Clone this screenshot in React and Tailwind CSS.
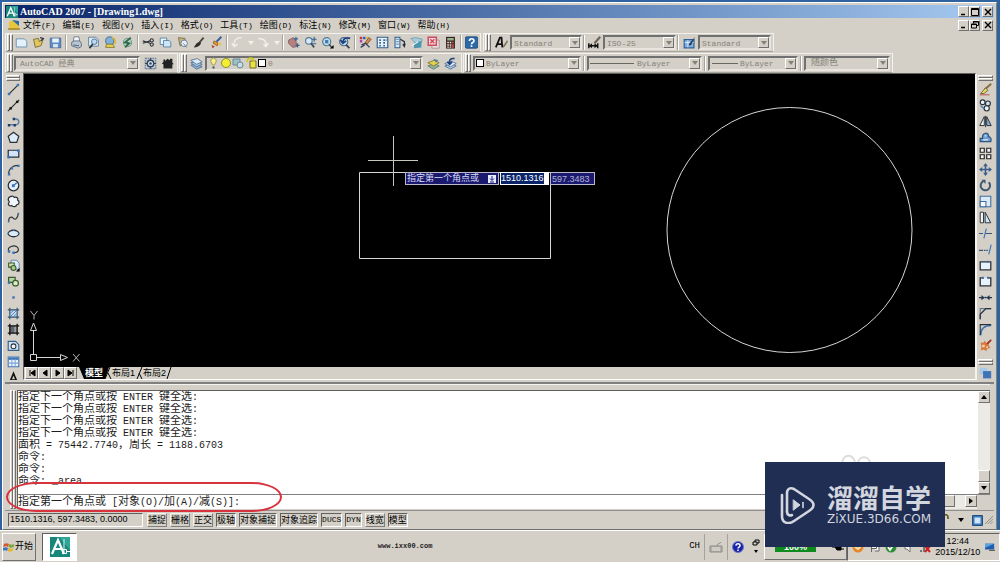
import { useState } from 'react';

const RAISED = 'border border-t-white border-l-white border-r-[#707070] border-b-[#707070]';
const SUNKEN = 'border border-t-[#606060] border-l-[#606060] border-r-white border-b-white';

const K = '#2a3038';
const B = '#3f74b5';
const L = '#cfe4fa';

/* 16x16 glyphs */
const ICONS = {
  blank: <path d="M1.5 3.5h10l3 3v7h-13z" fill="#e4f1fb" stroke="#6c95b4" strokeWidth="1.2" />,
  open: (
    <>
      <path d="M2 4l6-1 1 4 5-4-3 9-7 2z" fill="#e2c65a" stroke="#6b6331" />
      <path d="M10 2l4 1-3 3" fill="none" stroke={K} strokeWidth="1.4" />
    </>
  ),
  save: (
    <>
      <path d="M1.5 2.5h13v12h-13z" fill="#5d8cc4" stroke="#49688f" />
      <path d="M4 3h8v5H4z" fill="#e9f3fb" />
      <path d="M5 10h6v4H5z" fill="#dfe6ee" />
    </>
  ),
  print: (
    <>
      <path d="M5 1h6l1 6H4z" fill="#f4f8fb" stroke="#607080" />
      <path d="M2 8l3-2h7l2 3v4l-4 2-8-3z" fill="#b7c5d6" stroke="#566374" />
      <path d="M4 11l7 1" stroke="#3d4b5e" />
    </>
  ),
  preview: (
    <>
      <path d="M2 1.5h9l3 3v8H2z" fill="#dcebf8" stroke="#52759d" />
      <circle cx="9" cy="7" r="3.4" fill="#b9d8f2" stroke="#41607f" />
      <path d="M7 10l-4 5" stroke={K} strokeWidth="2" />
    </>
  ),
  publish: (
    <>
      <circle cx="7" cy="6" r="5" fill="#7fb1da" stroke="#41607f" />
      <path d="M3 10h8l2 4H2z" fill="#e9d24e" stroke="#77702d" />
      <path d="M10 2c4 1 5 5 3 8" fill="none" stroke="#d9b92f" strokeWidth="2" />
    </>
  ),
  dwf: (
    <>
      <circle cx="8" cy="8" r="5" fill="#b8d7c6" stroke="#5b8776" />
      <path d="M12 2L5 8l5 1-5 5" fill="none" stroke="#2f6b4f" strokeWidth="2.4" />
    </>
  ),
  cut: (
    <>
      <path d="M1 6l9 3M1 9l9-3" stroke={K} strokeWidth="1.3" />
      <circle cx="12" cy="5.5" r="2" fill="none" stroke={K} strokeWidth="1.3" />
      <circle cx="12" cy="10.5" r="2" fill="none" stroke={K} strokeWidth="1.3" />
    </>
  ),
  copy: (
    <>
      <path d="M1.5 2.5h8v8h-8z" fill="#eaf4fc" stroke="#4a779c" />
      <path d="M5.5 5.5h7l2 2v6h-9z" fill="#cfe5f7" stroke="#4a779c" />
    </>
  ),
  paste: (
    <>
      <path d="M3 2l8 1 1 8-7 1z" fill="#c6b478" stroke="#6d6445" />
      <circle cx="10" cy="9" r="4" fill="#e9f2f8" stroke="#557089" />
      <path d="M9 9l4 5" stroke="#557089" />
    </>
  ),
  brush: (
    <>
      <path d="M13 2L8 8" stroke="#4e4638" strokeWidth="2.4" />
      <path d="M8 7l2 2c-2 4-5 5-9 5 2-3 3-6 7-7z" fill="#2f2d2b" />
    </>
  ),
  match: (
    <>
      <path d="M14 1L8 7" stroke="#3d5f9c" strokeWidth="2.4" />
      <path d="M5 6l5 3-1 3-5-3z" fill="#e99a32" stroke="#8c5618" />
      <path d="M2 11l4 2-3 2z" fill="#b33b2c" />
      <path d="M11 8l3 1-1 3-3-1z" fill="#e9c34c" />
    </>
  ),
  undo: <path d="M13 2C6 2 3 6 4 12M1 9l3 4 4-3" fill="none" stroke="#f2f0ea" strokeWidth="1.8" />,
  redo: <path d="M2 3c6 0 10 3 9 9M8 10l3 3 3-4" fill="none" stroke="#f2f0ea" strokeWidth="1.8" />,
  pan: (
    <>
      <path d="M2 5l6-3 3 4 1 7-5 1-5-5z" fill="#b8807c" stroke="#7c5a5a" />
      <path d="M11 1v5M8.5 3.5h5M13 9v5M10.5 11.5h5" stroke="#39629c" strokeWidth="1.4" />
    </>
  ),
  zoomRt: (
    <>
      <circle cx="6" cy="6" r="4" fill="#d5eaf8" stroke="#537a99" strokeWidth="1.4" />
      <path d="M8.5 9l4 5" stroke="#3b4a5c" strokeWidth="2" />
      <path d="M12.5 1v6M9.5 4h6M10 9.5h5" stroke="#355f91" strokeWidth="1.3" />
    </>
  ),
  zoomWin: (
    <>
      <circle cx="7" cy="7" r="5" fill="#bcdcf0" stroke="#537a99" strokeWidth="1.4" />
      <path d="M5 5h4v4H5z" fill="#4878a6" />
      <path d="M10 10l3 4" stroke="#3b4a5c" strokeWidth="2" />
      <path d="M15.5 11v4.5H11z" fill="#000" />
    </>
  ),
  zoomPrev: (
    <>
      <circle cx="7" cy="7" r="5" fill="#bcdcf0" stroke="#4d6b85" strokeWidth="1.4" />
      <path d="M15 3c-5-2-8 0-9 4M3 5l3 4 4-3" fill="none" stroke="#1f3f7d" strokeWidth="2.2" />
      <path d="M10 11l4 4" stroke="#2f3b4c" strokeWidth="2" />
    </>
  ),
  props: (
    <>
      <path d="M1 1h3v3H1z" fill="#c33" />
      <path d="M5 1h3v3H5z" fill="#3558c8" />
      <path d="M9 1h3v3H9z" fill="#d8c22d" />
      <path d="M1 5h3v3H1z" fill="#b13bb0" />
      <path d="M12 2l3 2-5 6-3-1z" fill="#cf8d55" stroke="#7b4e2c" />
      <path d="M3 11l5-2 5 5M2 14l5-3" stroke="#3a3f58" strokeWidth="1.6" fill="none" />
    </>
  ),
  design: (
    <>
      <path d="M1.5 1.5h13v13h-13z" fill="#e3f1fb" stroke="#335e8c" strokeWidth="1.4" />
      <path d="M4 4h2v2H4zM4 7.5h2v2H4zM4 11h2v2H4zM9 4h2v2H9zM12 4h1v2h-1zM9 7.5h2v2H9zM9 11h2v2H9z" fill="#335e8c" />
    </>
  ),
  palette: (
    <>
      <path d="M2.5 1.5h6v13h-6z" fill="#dcecf8" stroke="#335e8c" strokeWidth="1.3" />
      <path d="M4 4h3M4 7h3M4 10h3" stroke="#335e8c" />
      <path d="M9 4l5 3v4M12 10l2 3 1-4" fill="none" stroke={K} strokeWidth="1.5" />
    </>
  ),
  sheet: (
    <>
      <path d="M1 3l6-1 8 2-1 4-7 1z" fill="#a9cbdc" stroke="#6d97ab" />
      <path d="M5 8l9-2v8l-9 1z" fill="#4e94ad" />
      <path d="M2 12l8-5" stroke="#e6f4f9" strokeWidth="1.5" />
    </>
  ),
  markup: (
    <>
      <path d="M6 5h9v10H6z" fill="#e6e1e2" stroke="#a88" />
      <path d="M1.5 1.5h10v10h-10z" fill="#f6dbe0" stroke="#cf4a5d" strokeWidth="1.8" />
      <path d="M4 4l5 5M9 4L4 9" stroke="#cf4a5d" strokeWidth="1.8" />
    </>
  ),
  calc: (
    <>
      <path d="M2.5 1h11v14.5h-11z" fill="#3b2626" />
      <path d="M4 2.5h8v3H4z" fill="#93b58a" />
      <path d="M4 7h2v2H4zM7 7h2v2H7zM4 10h2v2H4zM7 10h2v2H7zM4 13h2v1.5H4zM7 13h2v1.5H7z" fill="#e7dcd2" />
      <path d="M10 7h2v2h-2zM10 10h2v4.5h-2z" fill="#c8544a" />
    </>
  ),
  help: (
    <>
      <rect x="0.5" y="1" width="15" height="14" rx="1.5" fill="#2b69a8" stroke="#1d4a7b" />
      <path d="M5.5 6c0-3.500 5.5-3.500 5.5 0 0 2-3 2-3 4M8 11.5v2" fill="none" stroke="#fff" strokeWidth="2" />
    </>
  ),
  textStyle: (
    <>
      <path d="M1 14L6 2h2l1 12M3 10h6" fill="none" stroke="#111" strokeWidth="2.2" />
      <path d="M15 5l-5 7-1 3 3-2 4-6z" fill="#7f755e" />
    </>
  ),
  dimStyle: (
    <>
      <path d="M1 9v6M12 9v6M1 12h11" stroke="#111" strokeWidth="1.8" />
      <path d="M1 12l4-3v6zM12 12L8 9v6z" fill="#111" />
      <path d="M15 1L8 9" stroke="#6b6354" strokeWidth="2.6" />
    </>
  ),
  tableStyle: (
    <>
      <path d="M1.5 4.5h12v10h-12z" fill="#7fb0e2" stroke="#2f5f9b" strokeWidth="1.5" />
      <path d="M2 8h11M6 5v9" stroke="#e5f1fb" />
      <path d="M15 1L8 9l-1 3 3-1z" fill="#2a3a52" />
    </>
  ),
  gear: (
    <>
      <path d="M1.5 1.5h13v13h-13z" fill="#bcc8d6" stroke="#46566b" strokeDasharray="2 1" />
      <circle cx="8" cy="8" r="4" fill="#dfe9f3" stroke="#2f425b" strokeWidth="1.8" />
      <circle cx="8" cy="8" r="1.5" fill="#2f425b" />
      <path d="M8 1.5v3M8 11.5v3M1.5 8h3M11.5 8h3" stroke="#2f425b" strokeWidth="1.5" />
    </>
  ),
  home: (
    <path d="M1 8l2-2V3h2v2l3-3 3 2V2h3v5l2 2h-2v5H3V9z" fill="#222" />
  ),
  layers: (
    <>
      <path d="M1 10l8-2 6 4-7 3z" fill="#8fb0d0" stroke="#4c6c8f" />
      <path d="M1 7l8-2 6 4-7 3z" fill="#a9c7e3" stroke="#4c6c8f" />
      <path d="M1 4l8-2 6 4-7 3z" fill="#dcebf8" stroke="#4c6c8f" />
    </>
  ),
  layerCur: (
    <>
      <path d="M1 11l8-3 6 3-7 4z" fill="#93b3a0" stroke="#5a7566" />
      <path d="M1 7l8-3 6 3-7 4z" fill="#e2d24b" stroke="#77702d" />
      <path d="M8 2l6 2-3 3" fill="#4d7fae" />
    </>
  ),
  layerPrev: (
    <>
      <path d="M1 11l8-3 6 3-7 4z" fill="#a9c7e3" stroke="#4c6c8f" />
      <path d="M1 8l8-3 6 3-7 4z" fill="#dcebf8" stroke="#4c6c8f" />
      <path d="M13 2c-5-1-7 2-6 6M4 6l3 3 3-3" fill="none" stroke="#1f3f7d" strokeWidth="2" />
    </>
  ),
  line: (
    <>
      <path d="M2 14L14 2" stroke={K} strokeWidth="1.5" />
      <path d="M1 12h3v3H1zM12 1h3v3h-3z" fill={B} />
    </>
  ),
  xline: (
    <>
      <path d="M1 15L15 1" stroke={K} strokeWidth="1.5" />
      <path d="M3 10h3v3H3zM11 2h3v3h-3z" fill="#111" />
    </>
  ),
  pline: (
    <>
      <path d="M2 12h9a3.5 3.5 0 000-7H9" fill="none" stroke="#5a7fa8" strokeWidth="1.8" />
      <path d="M1 11h3v3H1zM8 11h3v3H8zM7 3.5h3v3H7z" fill="#1f3c66" />
    </>
  ),
  polygon: <path d="M8 1.5l6.5 5-2.5 7.5H4L1.5 6.5z" fill="#ddecf8" stroke={K} strokeWidth="1.5" />,
  rect: (
    <>
      <path d="M1.5 4h13v8.5h-13z" fill={L} stroke={K} strokeWidth="1.5" />
      <path d="M0.5 11h3v3h-3zM12.5 3h3v3h-3z" fill={B} />
    </>
  ),
  arc: (
    <>
      <path d="M2 14C2 7 7 3 14 3" fill="none" stroke={K} strokeWidth="1.5" />
      <path d="M1 12.5h3v3H1zM4.5 5h3v3h-3zM12.5 2h3v3h-3z" fill={B} />
    </>
  ),
  circle: (
    <>
      <circle cx="8" cy="8" r="6.5" fill="#e4f1fb" stroke={K} strokeWidth="1.6" />
      <path d="M8 8l4-3.500" stroke={B} strokeWidth="1.6" />
      <path d="M6 6.5h3.5V10H6z" fill={B} />
    </>
  ),
  cloud: (
    <path
      d="M4 2c2-1 4-1 5 1 3-1 5 1 4 3 3 2 2 6-1 6-1 3-4 3-6 1-3 1-5-1-4-3 1-1 1-2 0-3-1-2 0-4 2-5z"
      fill="#f2f7fb"
      stroke={K}
      strokeWidth="1.5"
    />
  ),
  spline: (
    <>
      <path d="M2 13c0-7 4-6 6-4s5 1 6-6" fill="none" stroke={K} strokeWidth="1.4" />
      <path d="M1 12h2v2H1zM13 2h2v2h-2z" fill={B} />
    </>
  ),
  ellipse: (
    <>
      <ellipse cx="8" cy="8" rx="6.5" ry="4" fill="#dcebf8" stroke={K} strokeWidth="1.6" />
      <path d="M0.5 7h2v2h-2zM13.5 7h2v2h-2zM7 3h2v2H7z" fill={B} />
    </>
  ),
  ellipseArc: (
    <>
      <path d="M2 10C-1 3 14 1 14 8c0 3-3 4-6 4" fill="none" stroke={K} strokeWidth="1.5" />
      <path d="M6.5 10.5h3v3h-3zM1 9h3v3H1z" fill={B} />
    </>
  ),
  insert: (
    <>
      <path d="M5 1.5h7l3 4v7H5z" fill="#dcebf8" stroke="#51799e" />
      <path d="M2 5h7v5H2z" fill="#c8e2a8" stroke="#3c5a2b" strokeWidth="1.3" />
      <circle cx="8" cy="11" r="3" fill="#a9cf8c" stroke="#3c5a2b" strokeWidth="1.3" />
      <path d="M15.5 11v4.5H11z" fill="#000" />
    </>
  ),
  block: (
    <>
      <path d="M2 3h8v6H2z" fill="#b7d4a6" stroke="#3c5a2b" strokeWidth="1.5" />
      <circle cx="10.5" cy="10" r="3.5" fill="#d9ecc8" stroke="#3c5a2b" strokeWidth="1.5" />
      <path d="M1 8h3v3H1z" fill={B} />
    </>
  ),
  point: <path d="M6.5 6.5h3v3h-3z" fill={B} />,
  hatch: (
    <>
      <path d="M3.5 3.5h9v9h-9z" fill="#c3dcf2" />
      <path d="M3.5 1v14M12.5 1v14M1 3.5h14M1 12.5h14" stroke="#34506f" strokeWidth="1.4" />
      <path d="M4 8l4-4M4 12l8-8M8 12l4-4" stroke={B} />
    </>
  ),
  gradient: (
    <>
      <path d="M3.5 3.5h9v9h-9z" fill="#63656b" />
      <path d="M9 4h3v8H9z" fill="#9ba1ab" />
      <path d="M3.5 1v14M12.5 1v14M1 3.5h14M1 12.5h14" stroke="#111" strokeWidth="1.6" />
    </>
  ),
  region: (
    <>
      <path d="M1.5 3h9l4 4v7h-13z" fill={L} stroke="#365f8b" strokeWidth="1.4" />
      <circle cx="8" cy="9" r="3" fill="#f0f6fb" stroke={K} strokeWidth="1.3" />
    </>
  ),
  table: (
    <>
      <path d="M1.5 2.5h13v12h-13z" fill="#eef5fc" stroke={B} strokeWidth="1.3" />
      <path d="M2 4.5h12" stroke={B} strokeWidth="3" />
      <path d="M2 10h12M6 5v9M10 5v9" stroke="#7da5d6" strokeWidth="1.3" />
    </>
  ),
  mtext: <path d="M3 15L8 3l5 12M5 11h6" fill="none" stroke="#111" strokeWidth="2" />,
  erase: (
    <>
      <path d="M15 1L7 8" stroke="#8b6a3c" strokeWidth="2.4" />
      <path d="M8 6l3 3-5 4H2z" fill="#efd85e" stroke="#5b5330" />
      <path d="M1 14.5h12" stroke="#c05f58" strokeWidth="1.4" />
    </>
  ),
  copyObj: (
    <>
      <circle cx="4.5" cy="4" r="3" fill="#eaf3fa" stroke={K} strokeWidth="1.4" />
      <circle cx="11" cy="5.5" r="3" fill="#cfe2f2" stroke={K} strokeWidth="1.4" />
      <circle cx="9.5" cy="11.5" r="3.2" fill="#eaf3fa" stroke={K} strokeWidth="1.4" />
      <path d="M2 8l4 4" stroke={B} strokeWidth="1.4" />
    </>
  ),
  mirror: (
    <>
      <path d="M6.5 2v11H1z" fill="#f0f5fa" stroke={K} strokeWidth="1.2" />
      <path d="M9.5 2v11H15z" fill="#8ab2dc" stroke={K} strokeWidth="1.2" />
      <path d="M8 1v14" stroke="#222" />
    </>
  ),
  offset: (
    <>
      <path d="M1.5 13v-4h3C3 1 13 1 11.5 7c3 0 4 3 3 6z" fill="#6ea0d4" stroke="#2d5480" strokeWidth="1.5" />
      <path d="M5 11h6M7 6h2" stroke="#dbeaf8" strokeWidth="1.5" />
    </>
  ),
  array: (
    <path d="M1.5 1.5h5v5h-5zM9.5 1.5h5v5h-5zM1.5 9.5h5v5h-5zM9.5 9.5h5v5h-5z" fill="#f2f5f8" stroke="#222" strokeWidth="1.4" />
  ),
  move: (
    <path
      d="M8 0l3 4H9v3h3V5l4 3-4 3V9H9v3h2l-3 4-3-4h2V9H4v2L0 8l4-3v2h3V4H5z"
      fill="#3a5f8c"
    />
  ),
  rotate: (
    <>
      <path d="M5 3a5.8 5.8 0 107 1" fill="none" stroke="#3c5874" strokeWidth="2.4" />
      <path d="M3 1h5v5z" fill="#3c5874" />
    </>
  ),
  scale: (
    <>
      <path d="M1.5 1.5h13v13h-13z" fill="#dbeaf8" stroke="#3f6c9b" strokeWidth="1.3" />
      <path d="M1.5 8h7v6.5h-7z" fill="#f6fafd" stroke="#3f6c9b" strokeWidth="1.3" />
    </>
  ),
  stretch: (
    <>
      <path d="M1.5 1.5h4v13h-4z" fill="#f5f8fb" stroke={K} strokeWidth="1.2" />
      <path d="M7.5 1.5l7 13h-7z" fill={L} stroke={K} strokeWidth="1.2" />
    </>
  ),
  trim: (
    <>
      <path d="M0 8h5M8 8h8" stroke="#3b5674" strokeWidth="1.4" />
      <path d="M9 2L6 14" stroke={B} strokeWidth="1.5" />
    </>
  ),
  extend: (
    <>
      <path d="M0 9h5M6 9h2M9 9h2" stroke="#3b5674" strokeWidth="1.4" />
      <path d="M15 2l-3 12" stroke={B} strokeWidth="1.5" />
    </>
  ),
  breakPt: (
    <>
      <path d="M1.5 3.5h13v10h-13z" fill="#e8f2fb" stroke={K} strokeWidth="1.6" />
      <path d="M10 2h2v3h-2z" fill={B} />
    </>
  ),
  breakObj: (
    <>
      <path d="M2 3.5h12v10H2z" fill="#e8f2fb" />
      <path d="M5 3.5H1.5v10h13v-10H11" fill="none" stroke={K} strokeWidth="1.6" />
      <path d="M4 2h2v3H4zM10 2h2v3h-2z" fill={B} />
    </>
  ),
  join: <path d="M0 7.5h3V5l4 3.2L3 11.5V9H0zM16 7.5h-3V5L9 8.2l4 3.3V9h3zM7 7h2v2H7z" fill="#20344e" />,
  chamfer: (
    <>
      <path d="M1.5 15V2H15" fill="none" stroke="#5d7a98" strokeWidth="1.3" />
      <path d="M1.5 15V9l7-7H15" fill="none" stroke={K} strokeWidth="1.6" />
    </>
  ),
  fillet: (
    <>
      <path d="M2 15C2 7 6 3 15 3" fill="none" stroke={B} strokeWidth="2" />
      <path d="M1.5 15V2H15" fill="none" stroke={K} strokeWidth="1.3" />
    </>
  ),
  explode: (
    <>
      <path d="M2 4l3 1 2-3 2 3 3-2v5l2 3-4 1-1 3-3-2-4 1 1-4z" fill="#d8763b" />
      <path d="M4 7h3v3H4zM9 9h2v2H9z" fill="#f4d9a8" />
      <path d="M15 1l-5 5" stroke="#a32b1c" strokeWidth="2" />
    </>
  ),
  order: (
    <>
      <path d="M1 1h9v8H1z" fill="#a9c9e8" />
      <path d="M5 5h10v9H5z" fill="#3f74b5" />
    </>
  ),
};

const FILE_TOOLS = [
  [['blank', '新建'], ['open', '打开'], ['save', '保存']],
  [['print', '打印'], ['preview', '打印预览'], ['publish', '发布'], ['dwf', '三维 DWF']],
  [['cut', '剪切'], ['copy', '复制'], ['paste', '粘贴'], ['brush', '特性匹配'], ['match', '块编辑器']],
  [['undo', '放弃', true], ['redo', '重做', true]],
  [['pan', '实时平移'], ['zoomRt', '实时缩放'], ['zoomWin', '窗口缩放'], ['zoomPrev', '缩放上一个']],
  [['props', '特性'], ['design', '设计中心'], ['palette', '工具选项板'], ['sheet', '图纸集'], ['markup', '标记集'], ['calc', '计算器']],
  [['help', '帮助']],
];

const DRAW_TOOLS = [
  ['line', '直线'], ['xline', '构造线'], ['pline', '多段线'], ['polygon', '正多边形'], ['rect', '矩形'],
  ['arc', '圆弧'], ['circle', '圆'], ['cloud', '修订云线'], ['spline', '样条曲线'], ['ellipse', '椭圆'],
  ['ellipseArc', '椭圆弧'], ['insert', '插入块'], ['block', '创建块'], ['point', '点'], ['hatch', '图案填充'],
  ['gradient', '渐变色'], ['region', '面域'], ['table', '表格'], ['mtext', '多行文字'],
];

const MODIFY_TOOLS = [
  ['erase', '删除'], ['copyObj', '复制对象'], ['mirror', '镜像'], ['offset', '偏移'], ['array', '阵列'],
  ['move', '移动'], ['rotate', '旋转'], ['scale', '缩放'], ['stretch', '拉伸'], ['trim', '修剪'],
  ['extend', '延伸'], ['breakPt', '打断于点'], ['breakObj', '打断'], ['join', '合并'], ['chamfer', '倒角'],
  ['fillet', '圆角'], ['explode', '分解'],
];

const MENUS = [
  ['文件', 'F'], ['编辑', 'E'], ['视图', 'V'], ['插入', 'I'], ['格式', 'O'], ['工具', 'T'],
  ['绘图', 'D'], ['标注', 'N'], ['修改', 'M'], ['窗口', 'W'], ['帮助', 'H'],
];

const HISTORY = [
  '指定下一个角点或按 ENTER 键全选:',
  '指定下一个角点或按 ENTER 键全选:',
  '指定下一个角点或按 ENTER 键全选:',
  '指定下一个角点或按 ENTER 键全选:',
  '面积 = 75442.7740，周长 = 1188.6703',
  '命令:',
  '命令:',
  '命令: _area',
];

const Icon = ({ name }) => (
  <svg viewBox="0 0 16 16" className="size-[13px] shrink-0" aria-hidden="true">
    {ICONS[name]}
  </svg>
);

const Tool = ({ name, label, tall }) => (
  <button
    type="button"
    aria-label={label}
    className={`flex shrink-0 items-center justify-center ${tall ? 'h-4 w-full' : 'h-4 w-[17px]'}`}
  >
    <Icon name={name} />
  </button>
);

const Down = () => (
  <svg viewBox="0 0 6 4" className="h-1 w-[6px]" aria-hidden="true">
    <path d="M0 0h6L3 4z" fill="currentColor" />
  </svg>
);

const Grip = ({ flat }) =>
  flat ? (
    <div className="flex w-full shrink-0 flex-col px-px">
      <span className={`h-[3px] ${RAISED}`} />
      <span className={`h-[3px] ${RAISED}`} />
    </div>
  ) : (
    <div className="flex shrink-0 self-stretch">
      <span className={`w-[3px] ${RAISED}`} />
      <span className={`w-[3px] ${RAISED}`} />
    </div>
  );

const Sep = () => <span className="mx-px h-[15px] w-[2px] shrink-0 border-l border-r border-l-[#a5a29a] border-r-white" />;

const Bar = ({ children }) => (
  <div className="flex items-center border border-t-[#f4f2ec] border-l-[#f4f2ec] border-r-[#f4f2ec] border-b-[#a8a59d] pl-px">
    {children}
  </div>
);

const Combo = ({ label, value, width, size = 'text-[8px]', children }) => (
  <div className={`flex h-[15px] shrink-0 items-center border-2 border-t-[#707070] border-l-[#707070] border-r-[#e8e5de] border-b-[#e8e5de] pl-px text-[#858278] ${width}`}>
    {children}
    <select aria-label={label} className={`h-3 min-w-0 flex-1 appearance-none bg-transparent pl-px pt-px leading-[11px] outline-none ${size}`}>
      <option>{value}</option>
    </select>
    <span className={`pointer-events-none flex h-[11px] w-[11px] items-center justify-center bg-[#d4d0c8] ${RAISED}`}>
      <Down />
    </span>
  </div>
);

const Swatch = () => <span className="mr-px size-2 shrink-0 border border-black bg-white" />;

const WinButton = ({ label, children }) => (
  <button type="button" aria-label={label} className={`flex h-[11px] w-[11px] items-center justify-center bg-[#d4d0c8] ${RAISED}`}>
    <svg viewBox="0 0 8 8" className="size-2" fill="none" stroke="#000" aria-hidden="true">
      {children}
    </svg>
  </button>
);

const WinButtons = ({ restore }) => (
  <div className="flex">
    <WinButton label="最小化">
      <path d="M1 6.5h4" strokeWidth="1.5" />
    </WinButton>
    <WinButton label={restore ? '还原' : '最大化'}>
      {restore ? <path d="M2.5 2.5v-2h5v4h-2M.5 3h5v4h-5zM.5 3.5h5M2.5 1h5" /> : <path d="M.5 .5h7v7h-7zM.5 1.5h7" />}
    </WinButton>
    <span className="w-[2px]" />
    <WinButton label="关闭">
      <path d="M1 1l6 6M7 1L1 7" strokeWidth="1.4" />
    </WinButton>
  </div>
);

/* Chinese runs are set one size larger than the Latin ones */
const Mixed = ({ text }) =>
  text.split(/([\u3000-\uffef]+)/).map((part, i) => (
    <span key={i} className={i % 2 ? 'text-[11px]' : 'text-[10px]'}>
      {part}
    </span>
  ));

const AppLogo = ({ className }) => (
  <svg viewBox="0 0 20 20" className={className} aria-hidden="true">
    <path d="M0 0h20v20H0z" fill="#17877c" />
    <path d="M9 0l11 13V0z" fill="#2ea597" />
    <path d="M2 17L8 3l6 14M4 12h8" fill="none" stroke="#fff" strokeWidth="2.2" />
    <path d="M14 2v14" stroke="#d9f1ee" />
    <path d="M12.5 12.5h4v4h-4z" fill="none" stroke="#fff" />
    <path d="M16 14.5h4" stroke="#fff" />
  </svg>
);

const Drawing = () => (
  <div className="relative min-h-0 flex-1 overflow-hidden bg-black">
    <svg className="absolute inset-0 h-full w-full" fill="none" stroke="#d6d6d6" aria-hidden="true">
      <path d="M335.5 98.5h191v86h-191z" />
      <circle cx="765.5" cy="156" r="122.5" />
      <path d="M344 86.5h50M369.5 62v50" stroke="#c9c7bb" />
    </svg>
    <svg className="absolute bottom-[2px] left-1 h-[60px] w-[60px]" fill="none" stroke="#d6d6d6" aria-hidden="true">
      <path d="M2.5 49.5h6v6h-6zM5.5 49V25M2.5 25.5L5.5 18l3 7.5zM9 52.5h23M32.5 49.5l7 3-7 3z" />
      <path d="M2.5 6L6 10.5 9.5 6M6 10.5v4M45 49l6.5 7.5M51.5 49L45 56.5" stroke="#b4b4b4" />
    </svg>
    <div className="absolute left-[381px] top-[98px] flex h-[13px] gap-px text-[9px] leading-[11px] text-[#dcdcf0]">
      <label htmlFor="pt-x" className="flex w-[94px] items-center justify-between border border-[#b9b9c9] bg-[#191970] px-px">
        指定第一个角点或
        <svg viewBox="0 0 8 8" className="mr-px size-[8px]" aria-hidden="true">
          <path d="M0 0h8v8H0z" fill="#e6ecff" />
          <path d="M4 1v4M2 3.5l2 2 2-2M2 7h4" fill="none" stroke="#191970" />
        </svg>
      </label>
      <div className="flex w-[49px] items-center bg-white p-px">
        <input id="pt-x" readOnly value="1510.1316" className="h-[11px] w-[43px] bg-[#0a246a] text-white outline-none" />
      </div>
      <input
        aria-label="Y"
        readOnly
        value="597.3483"
        className="h-[13px] w-[45px] border border-[#b9b9c9] bg-[#191970] pl-px text-[#b4b4d0] outline-none"
      />
    </div>
  </div>
);

const TabStrip = () => (
  <div className="flex h-3 shrink-0 items-stretch bg-[#d4d0c8] pl-px text-[9px] leading-[11px] text-black">
    {[
      ['第一个', 'M2 1v6M7 1L3 4l4 3z'],
      ['上一个', 'M6 1L2 4l4 3z'],
      ['下一个', 'M2 1l4 3-4 3z'],
      ['最后一个', 'M1 1l4 3-4 3zM6 1v6'],
    ].map(([label, d]) => (
      <button key={label} type="button" aria-label={label} className={`flex w-[13px] items-center justify-center ${RAISED}`}>
        <svg viewBox="0 0 8 8" className="size-2" fill="#000" stroke="#000" aria-hidden="true">
          <path d={d} />
        </svg>
      </button>
    ))}
    <svg viewBox="0 0 8 12" className="h-3 w-2" aria-hidden="true">
      <path d="M2 0h6v12H7z" fill="#000" />
    </svg>
    <button type="button" className="bg-black font-bold text-white">模型</button>
    <svg viewBox="0 0 9 12" className="h-3 w-[9px]" aria-hidden="true">
      <path d="M0 0h6L2 12H0z" fill="#000" />
      <path d="M7 0L2 12M5 6l3 6" stroke="#000" fill="none" />
    </svg>
    <button type="button">布局1</button>
    <svg viewBox="0 0 8 12" className="h-3 w-2" aria-hidden="true">
      <path d="M7 0L2 12M4 6l3 6" stroke="#000" fill="none" />
    </svg>
    <button type="button">布局2</button>
    <svg viewBox="0 0 6 12" className="h-3 w-[6px]" aria-hidden="true">
      <path d="M5 0L1 12" stroke="#000" fill="none" />
    </svg>
  </div>
);

const ScrollButton = ({ label, d }) => (
  <button type="button" aria-label={label} className={`flex size-3 shrink-0 items-center justify-center bg-[#d4d0c8] ${RAISED}`}>
    <svg viewBox="0 0 6 6" className="size-[6px]" aria-hidden="true">
      <path d={d} fill="#000" />
    </svg>
  </button>
);

const CommandPanel = () => (
  <div className="flex shrink-0 border-t-2 border-[#808080] pb-px pl-[5px] pr-1">
    <div className="flex w-full gap-px border-t border-[#f4f2ec] pt-[5px]">
      <Grip />
      <div className="min-w-0 flex-1 border border-b-0 border-r-0 border-[#606060] bg-white font-[Liberation_Mono,Noto_Sans_CJK_SC,monospace] text-[#1c1c1c]">
        <div className="flex h-[103px]">
          <ol className="min-w-0 flex-1">
            {HISTORY.map((row, i) => (
              <li key={i} className="h-3 overflow-hidden whitespace-pre leading-[11px]">
                <Mixed text={row} />
              </li>
            ))}
          </ol>
          <div className="flex w-3 flex-col bg-[#eceae5]">
            <ScrollButton label="向上滚动" d="M0 5l3-4 3 4z" />
            <span className="flex-1" />
            <span className={`h-3 bg-[#d4d0c8] ${RAISED}`} />
            <ScrollButton label="向下滚动" d="M0 1l3 4 3-4z" />
          </div>
        </div>
        <div className="flex h-[15px] border-t border-[#808080]">
          <label htmlFor="cmd" className="whitespace-pre leading-3">
            <Mixed text="指定第一个角点或 [对象(O)/加(A)/减(S)]:" />
          </label>
          <input id="cmd" className="h-3 min-w-0 flex-1 text-[10px] outline-none" />
          <div className="flex w-[212px] bg-[#eceae5]">
            <ScrollButton label="向左滚动" d="M5 0L1 3l4 3z" />
            <span className={`ml-[26px] h-3 flex-1 bg-[#d4d0c8] ${RAISED}`} />
            <span className="w-[10px]" />
            <ScrollButton label="向右滚动" d="M1 0l4 3-4 3z" />
          </div>
          <span className="w-[13px] bg-[#d4d0c8]" />
        </div>
      </div>
    </div>
  </div>
);

const MODES = [
  ['捕捉', false], ['栅格', false], ['正交', false], ['极轴', true], ['对象捕捉', true],
  ['对象追踪', true], ['DUCS', true], ['DYN', true], ['线宽', false], ['模型', true],
];

const StatusBar = () => {
  const [modes, setModes] = useState(MODES);
  const toggle = (name) => setModes(modes.map(([n, on]) => [n, n === name ? !on : on]));

  return (
    <div className="flex h-[19px] shrink-0 items-center gap-[3px] border-t border-[#909090] pl-[3px] pr-px text-[9px]">
      <div className={`mr-px flex h-[14px] w-[135px] items-center pl-px ${SUNKEN}`}>1510.1316, 597.3483, 0.0000</div>
      {modes.map(([name, on]) => (
        <button
          key={name}
          type="button"
          aria-pressed={on}
          onClick={() => toggle(name)}
          className={`h-[14px] leading-3 ${/[A-Z]/.test(name) ? 'font-[Liberation_Mono,monospace] text-[8px]' : ''} ${
            on ? SUNKEN : 'border border-t-[#f4f2ec] border-l-[#f4f2ec] border-r-[#808080] border-b-[#808080]'
          }`}
        >
          {name}
        </button>
      ))}
      <div className="ml-auto flex items-center">
        <svg viewBox="0 0 14 12" className="h-3 w-[14px]" aria-hidden="true">
          <path d="M1.5 5h7v6h-7z" fill="#c9b22e" stroke="#5f5412" />
          <path d="M7 5V3c0-3 5-3 5 0v2" fill="none" stroke="#5f5412" strokeWidth="1.6" />
        </svg>
        <span className="px-2">
          <Down />
        </span>
        <svg viewBox="0 0 11 11" className="mr-[2px] size-[11px]" aria-hidden="true">
          <path d="M.5 .5h10v10H.5z" fill="#3c77b8" stroke="#244d80" />
          <path d="M2.5 2.5h6v6h-6z" fill="#cfe6fa" />
        </svg>
        <svg viewBox="0 0 9 9" className="size-2" aria-hidden="true">
          <path d="M0 9l9-9M3 9l6-6M6 9l3-3" stroke="#8b887f" />
        </svg>
      </div>
    </div>
  );
};

const Taskbar = () => (
  <div className="flex h-8 shrink-0 items-center border-t border-white bg-[#d4d0c8] pl-[2px] text-[9px]">
    <button type="button" className={`flex h-[28px] w-[34px] items-center text-black ${RAISED}`}>
      <svg viewBox="0 0 12 12" className="size-3" aria-hidden="true">
        <path d="M1 3c2-1 3-1 5 0L5 6C4 5 2 5 0 6z" fill="#d9572b" />
        <path d="M6.5 3c2 1 3 1 5 0l-1 3c-2 1-3 1-5 0z" fill="#74a83a" />
        <path d="M0 7c2-1 3-1 5 0l-1 3C3 9 1 9-.5 10z" fill="#3b74c0" />
        <path d="M5.5 7c2 1 3 1 5 0l-1 3c-2 1-3 1-5 0z" fill="#e7b52c" />
      </svg>
      开始
    </button>
    <button type="button" aria-label="AutoCAD 2007" className={`ml-[6px] flex h-[28px] w-[35px] items-center justify-center bg-white ${SUNKEN}`}>
      <AppLogo className="size-5" />
    </button>
    <div className="flex-1 pl-11 text-center font-[Liberation_Mono,monospace] text-[7px] font-bold text-[#222]">www.ixx00.com</div>
    <div className="flex items-center gap-1">
      <span className="font-[Liberation_Mono,monospace]">CH</span>
      <span className="h-[26px] w-px bg-[#a5a29a]" />
      <svg viewBox="0 0 14 12" className="h-3 w-[14px]" aria-hidden="true">
        <path d="M1 5h12v6H1z" fill="#b3b1aa" stroke="#8f8c84" />
        <path d="M3 7h8M3 9h8" stroke="#e8e6e0" />
        <path d="M8 5c0-3 3-2 4-4" fill="none" stroke="#8f8c84" />
      </svg>
      <span className="h-[26px] w-px bg-[#a5a29a]" />
      <svg viewBox="0 0 12 12" className="size-3" aria-hidden="true">
        <circle cx="6" cy="6" r="5.5" fill="#1722a8" stroke="#6f78c8" />
        <path d="M4 4.8c0-2.6 4-2.6 4 0 0 1.4-2 1.4-2 2.7M6 8.5V10" fill="none" stroke="#fff" strokeWidth="1.5" />
      </svg>
      <svg viewBox="0 0 8 16" className="ml-1 mr-1 h-4 w-2" aria-hidden="true">
        <path d="M3 3V1h4v3H5M1 3h4v3H1z" fill="none" stroke="#000" />
        <path d="M2 11h4l-2 3z" fill="#000" />
      </svg>
    </div>
    <div className={`flex h-[26px] w-[83px] items-center gap-4 pl-[10px] ${RAISED}`}>
      <span className="h-[10px] w-[41px] bg-[#0f8a1e] text-center font-bold leading-[10px] text-white">100%</span>
      <svg viewBox="0 0 12 8" className="h-2 w-3" aria-hidden="true">
        <path d="M0 4h3l2-2h4v1h3M9 6h3M3 4l2 3h4V2" fill="#000" stroke="#000" />
      </svg>
    </div>
    <div className={`flex h-7 w-[153px] items-center justify-between px-1 ${SUNKEN}`}>
      <svg viewBox="0 0 12 12" className="size-3" aria-hidden="true">
        <circle cx="6" cy="6" r="5.5" fill="#e8872a" />
        <path d="M2 5l4 3 4-4" fill="none" stroke="#fbe3b4" strokeWidth="2" />
      </svg>
      <svg viewBox="0 0 12 12" className="size-3" aria-hidden="true">
        <path d="M2.5 1v10M2.5 1.5h5v6h-5M7 5h3v5H6" fill="#f6f6f6" stroke="#666" />
      </svg>
      <svg viewBox="0 0 12 12" className="size-3" aria-hidden="true">
        <circle cx="6" cy="6" r="5.5" fill="#2c8c35" />
        <path d="M3 6l2 3 4-6" fill="none" stroke="#fff" strokeWidth="1.8" />
      </svg>
      <svg viewBox="0 0 12 12" className="size-3" aria-hidden="true">
        <path d="M3 4h2l3-3v10L5 8H3z" fill="#f6f6f6" stroke="#777" />
      </svg>
      <svg viewBox="0 0 12 12" className="size-3" aria-hidden="true">
        <path d="M1 9h2v2H1zM4 6h2v5H4z" fill="#777" />
        <path d="M6 5l5 6M11 5l-5 6" stroke="#d02020" strokeWidth="2" />
      </svg>
      <div className="text-center leading-[11px]">
        <div>12:44</div>
        <div>2015/12/10</div>
      </div>
      <svg viewBox="0 0 12 12" className="size-[10px]" aria-hidden="true">
        <path d="M0 2h11v7H0z" fill="#1f5fae" />
        <path d="M0 2h11L0 7z" fill="#5ea2dd" />
        <path d="M5 10h7" stroke="#333" />
      </svg>
    </div>
  </div>
);

const Watermark = () => (
  <>
    <svg className="absolute bottom-[98px] right-[126px] h-[10px] w-[34px]" fill="none" stroke="#dcdcda" strokeWidth="2" aria-hidden="true">
      <path d="M2 10c0-11 13-11 13 0M18 10c0-9 12-9 12 0" />
    </svg>
    <div className="absolute bottom-[15px] right-[55px] flex h-[85px] w-[180px] items-center gap-3 bg-[#202e54] pl-[14px] text-[#d3d6de]">
      <svg viewBox="0 0 36 38" className="h-[38px] w-9 shrink-0" fill="none" stroke="currentColor" strokeLinecap="round" strokeLinejoin="round" aria-hidden="true">
        <path
          d="M8 26V7c0-4 3-6 7-4l15 10c6 4 6 8 0 12L15 35c-6 4-12 2-12-5V9"
          strokeWidth="2.6"
        />
        <path d="M8 26c0 3 3 4 5 3" strokeWidth="2.6" />
        <path d="M14.5 14l6.5 5-6.5 5z" fill="currentColor" strokeWidth="1" />
        <path d="M24 16.500v5" strokeWidth="1.6" />
      </svg>
      <div>
        <div className="text-[26px] font-bold leading-[28px]">溜溜自学</div>
        <div className="font-['DejaVu_Sans',sans-serif] text-[12px] leading-[12px]">ZiXUE.3D66.COM</div>
      </div>
    </div>
  </>
);

export default function App() {
  return (
    <div className="relative flex h-screen flex-col overflow-hidden bg-[#2f62a0] font-[Liberation_Sans,Noto_Sans_CJK_SC,sans-serif] text-black">
      <div className="ml-[2px] mr-[3px] mt-[2px] flex min-h-0 flex-1 flex-col border border-b-[#707070] border-l-white border-r-[#808080] border-t-white bg-[#d4d0c8] px-[2px] pt-[2px]">
        {/* Title */}
        <header className="flex h-[13px] shrink-0 items-center bg-linear-to-r from-[#0a246a] to-[#a6caf0] pr-px">
          <AppLogo className="ml-px size-3" />
          <h1 className="ml-[2px] flex-1 font-[Liberation_Serif,serif] text-[10px] font-bold leading-3 text-white">
            AutoCAD 2007 - [Drawing1.dwg]
          </h1>
          <WinButtons />
        </header>

        {/* Menu */}
        <nav className="flex h-[14px] shrink-0 items-center gap-[7px] pr-px text-[9px] leading-3">
          <svg viewBox="0 0 12 12" className="-mr-1 ml-[3px] size-3" aria-hidden="true">
            <path d="M1 3l5-2 5 5v5H1z" fill="#e8c53a" />
            <path d="M4 1l7 1v5z" fill="#2d6aa8" />
            <path d="M0 10h12" stroke="#7b6a22" />
          </svg>
          {MENUS.map(([name, key]) => (
            <button key={name} type="button">
              {name}
              <span className="font-[Liberation_Mono,monospace] text-[8px]">({key})</span>
            </button>
          ))}
          <span className="flex-1" />
          <WinButtons restore />
        </nav>

        {/* Toolbars */}
        <div className="flex h-5 shrink-0 items-stretch gap-[2px] pt-px font-[Liberation_Mono,Noto_Sans_CJK_SC,monospace]">
          <Bar>
            <Grip />
            {FILE_TOOLS.map((group, i) => (
              <div key={i} className="flex items-center">
                {i > 0 && <Sep />}
                {group.map(([name, label, menu]) => (
                  <div key={name} className="flex items-center">
                    <Tool name={name} label={label} />
                    {menu && (
                      <button type="button" aria-label={`${label}列表`} className="flex w-[9px] justify-center text-[#f2f0ea]">
                        <Down />
                      </button>
                    )}
                  </div>
                ))}
              </div>
            ))}
          </Bar>
          <Bar>
            <Grip />
            <span className="w-[2px]" />
            <Tool name="textStyle" label="文字样式" />
            <Combo label="文字样式" value="Standard" width="w-[72px]" />
            <Sep />
            <Tool name="dimStyle" label="标注样式" />
            <Combo label="标注样式" value="ISO-25" width="w-[73px]" />
            <Sep />
            <span className="w-px" />
            <Tool name="tableStyle" label="表格样式" />
            <Combo label="表格样式" value="Standard" width="w-[73px]" />
            <span className="w-[2px]" />
          </Bar>
        </div>
        <div className="flex h-[21px] shrink-0 items-stretch gap-px pt-px font-[Liberation_Mono,Noto_Sans_CJK_SC,monospace]">
          <Bar>
            <Grip />
            <span className="w-px" />
            <Combo label="工作空间" value="AutoCAD 经典" width="w-[126px]">
              <span className="w-[2px]" />
            </Combo>
            <span className="w-[2px]" />
            <Tool name="gear" label="工作空间设置" />
            <Tool name="home" label="我的工作空间" />
            <span className="w-px" />
          </Bar>
          <Bar>
            <Grip />
            <span className="w-px" />
            <Tool name="layers" label="图层特性管理器" />
            <Combo label="图层" value="0" width="w-[218px]">
              <svg viewBox="0 0 50 12" className="h-3 w-[50px]" aria-hidden="true">
                <path d="M5.5 1a3 3 0 00-2 5l1 2h2l1-2a3 3 0 00-2-5z" fill="#f6ee8e" stroke="#a39a55" />
                <path d="M4.5 9.5h2v2h-2z" fill="#4b4b4b" />
                <circle cx="18" cy="6" r="4.5" fill="#f3ee32" stroke="#928f2c" />
                <path d="M25 2h7v6h-7z" fill="#9fc0c6" stroke="#6b8a94" />
                <circle cx="32" cy="8" r="3" fill="#c5dde4" stroke="#6b8a94" />
                <path d="M42 4h6v7h-6z" fill="#eae04a" stroke="#77731f" />
                <path d="M39 5c0-5 7-5 7 0" fill="none" stroke="#cfc62e" strokeWidth="1.8" />
              </svg>
              <Swatch />
            </Combo>
            <span className="w-[2px]" />
            <Tool name="layerCur" label="置为当前" />
            <Tool name="layerPrev" label="上一个图层" />
            <span className="w-[2px]" />
          </Bar>
          <Bar>
            <Grip />
            <span className="w-[2px]" />
            <Combo label="颜色" value="ByLayer" width="w-[108px]">
              <Swatch />
            </Combo>
            <span className="w-px" />
            <Sep />
            <span className="w-px" />
            <Combo label="线型" value="ByLayer" width="w-[115px]">
              <span className="mr-[2px] h-px w-11 bg-[#6b6860]" />
            </Combo>
            <span className="w-px" />
            <Sep />
            <span className="w-px" />
            <Combo label="线宽" value="ByLayer" width="w-[90px]">
              <span className="mx-px h-px w-[26px] bg-[#6b6860]" />
            </Combo>
            <span className="w-px" />
            <Sep />
            <span className="w-px" />
            <Combo label="打印样式" value="随颜色" width="w-[86px]" size="text-[9px]">
              <span className="w-[3px]" />
            </Combo>
            <span className="w-[2px]" />
          </Bar>
        </div>

        {/* Workspace */}
        <main className="flex min-h-0 flex-1 items-stretch pb-[2px]">
          <div className="flex w-[18px] flex-col overflow-hidden pr-[2px] pt-[2px]">
            <Grip flat />
            {DRAW_TOOLS.map(([name, label]) => (
              <Tool key={name} name={name} label={label} tall />
            ))}
          </div>
          <div className="flex min-w-0 flex-1 flex-col border-b border-l border-r-2 border-t border-b-white border-l-[#606060] border-r-[#f4f2ec] border-t-[#606060]">
            <Drawing />
            <TabStrip />
          </div>
          <div className="flex w-[17px] flex-col overflow-hidden pt-[2px]">
            <Grip flat />
            {MODIFY_TOOLS.map(([name, label]) => (
              <Tool key={name} name={name} label={label} tall />
            ))}
            <span className="h-[6px] shrink-0" />
            <Grip flat />
            <Tool name="order" label="绘图次序" tall />
          </div>
        </main>

        <CommandPanel />
        <StatusBar />
      </div>
      <Taskbar />

      <div className="absolute bottom-[50px] left-[6px] h-[30px] w-[276px] rounded-[30px/15px] border-2 border-[#d8323c]" />
      <Watermark />
    </div>
  );
}
